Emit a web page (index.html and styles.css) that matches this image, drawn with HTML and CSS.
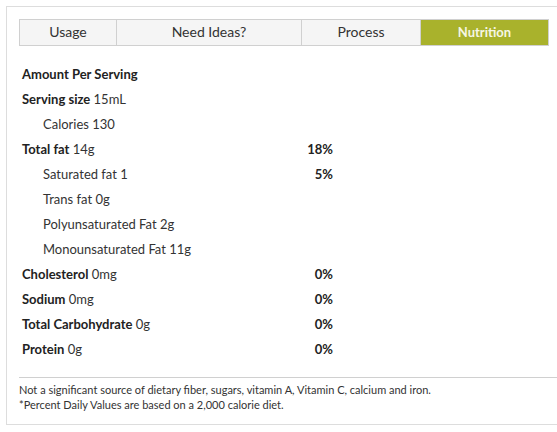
FILE: index.html
```html
<!DOCTYPE html>
<html>
<head>
<meta charset="utf-8">
<link rel="stylesheet" href="styles.css">
</head>
<body>
<div class="panel">
  <div class="tabs">
    <div class="tab tab-usage">Usage</div>
    <div class="tab tab-ideas">Need Ideas?</div>
    <div class="tab tab-process">Process</div>
    <div class="tab tab-nutrition active">Nutrition</div>
  </div>
  <div class="facts">
    <div class="row"><span class="label"><b>Amount Per Serving</b></span><span class="pct"></span></div>
    <div class="row"><span class="label"><b>Serving size</b> 15mL</span><span class="pct"></span></div>
    <div class="row sub"><span class="label">Calories 130</span><span class="pct"></span></div>
    <div class="row"><span class="label"><b>Total fat</b> 14g</span><span class="pct">18%</span></div>
    <div class="row sub"><span class="label">Saturated fat 1</span><span class="pct">5%</span></div>
    <div class="row sub"><span class="label">Trans fat 0g</span><span class="pct"></span></div>
    <div class="row sub"><span class="label">Polyunsaturated Fat 2g</span><span class="pct"></span></div>
    <div class="row sub"><span class="label">Monounsaturated Fat 11g</span><span class="pct"></span></div>
    <div class="row"><span class="label"><b>Cholesterol</b> 0mg</span><span class="pct">0%</span></div>
    <div class="row"><span class="label"><b>Sodium</b> 0mg</span><span class="pct">0%</span></div>
    <div class="row"><span class="label"><b>Total Carbohydrate</b> 0g</span><span class="pct">0%</span></div>
    <div class="row"><span class="label"><b>Protein</b> 0g</span><span class="pct">0%</span></div>
  </div>
  <div class="notes">
    <p>Not a significant source of dietary fiber, sugars, vitamin A, Vitamin C, calcium and iron.</p>
    <p>*Percent Daily Values are based on a 2,000 calorie diet.</p>
  </div>
</div>
</body>
</html>
```
FILE: styles.css
```css
html, body {
  margin: 0;
  padding: 0;
  background: #fff;
  overflow: hidden;
}
body {
  width: 557px;
  height: 432px;
  font-family: "Lato", "Open Sans", sans-serif;
  color: #333;
}
.panel {
  margin: 6px 0 0 6px;
  width: 600px;
  height: 419px;
  box-sizing: border-box;
  border: 1px solid #ddd;
  padding: 12px 0 0 12px;
  overflow: hidden;
}
.tabs {
  display: flex;
  width: 530px;
  height: 27px;
  box-sizing: border-box;
  border: 1px solid #d0d0d0;
}
.tab {
  display: flex;
  align-items: center;
  justify-content: center;
  background: #f5f5f5;
  font-size: 14px;
  color: #333;
  border-right: 1px solid #d0d0d0;
  box-sizing: border-box;
  padding-bottom: 2px;
}
.tab-usage { width: 97px; }
.tab-ideas { width: 185px; }
.tab-process { width: 119px; }
.tab-nutrition { flex: 1; border-right: none; }
.tab.active {
  background: #a9b22c;
  color: #f6f6e4;
  font-weight: bold;
  font-size: 13px;
}
.facts {
  padding: 15px 0 0 3px;
  height: 316px;
}
.row {
  display: flex;
  height: 25px;
  align-items: center;
  font-size: 13px;
  color: #333;
}
.row b { font-weight: bold; color: #222; }
.label { width: 285px; }
.sub .label { padding-left: 21px; box-sizing: border-box; }
.pct {
  width: 26px;
  text-align: right;
  font-weight: bold;
  font-size: 13px;
  color: #222;
}
.notes {
  border-top: 1px solid #d0d0d0;
  padding-top: 4px;
  font-size: 11px;
  color: #333;
}
.notes p {
  margin: 0;
  line-height: 15px;
}
```
